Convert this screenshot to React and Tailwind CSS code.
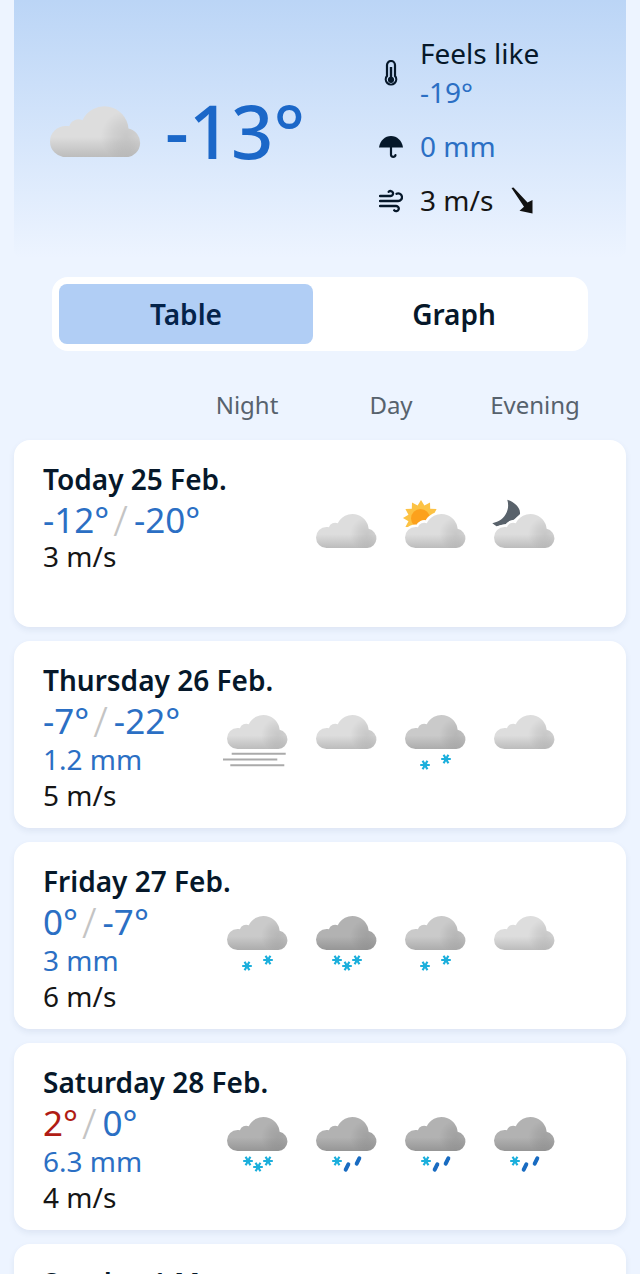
import { useId, useState } from "react";

const FONT = "font-['Noto_Sans','Open_Sans',sans-serif]";

const CLOUD_PATH =
  "M24.5 57a10.5 10.5 0 0 1 0-21c.9 0 1.7.1 2.4.2A6.6 6.6 0 0 1 35.8 32.2A16.2 16.2 0 0 1 66.6 37.8A9.7 9.7 0 0 1 65.3 57Z";

const TONES = {
  light: { top: "#dddddd", bottom: "#bcbcbc" },
  medium: { top: "#cacaca", bottom: "#acacac" },
  dark: { top: "#b2b2b2", bottom: "#969696" },
};

const days = [
  {
    title: "Today 25 Feb.",
    high: "-12°",
    low: "-20°",
    wind: "3 m/s",
    icons: [null, "cloudy", "partlyDay", "partlyNight"],
  },
  {
    title: "Thursday 26 Feb.",
    high: "-7°",
    low: "-22°",
    rain: "1.2 mm",
    wind: "5 m/s",
    icons: ["fog", "cloudy", "lightSnow", "cloudy"],
  },
  {
    title: "Friday 27 Feb.",
    high: "0°",
    low: "-7°",
    rain: "3 mm",
    wind: "6 m/s",
    icons: ["lightSnow", "snow", "lightSnow", "cloudy"],
  },
  {
    title: "Saturday 28 Feb.",
    high: "2°",
    warm: true,
    low: "0°",
    rain: "6.3 mm",
    wind: "4 m/s",
    icons: ["snow", "sleet", "sleet", "sleet"],
  },
  { title: "Sunday 1 Mar.", icons: [] },
];

const ICONS = {
  cloudy: { tone: "light", label: "Cloudy" },
  partlyDay: { tone: "light", label: "Partly cloudy", sun: true },
  partlyNight: { tone: "light", label: "Partly cloudy night", moon: true },
  fog: { tone: "light", label: "Fog", fog: true },
  lightSnow: { tone: "medium", label: "Light snow", flakes: [[34, 73], [55, 67]] },
  snow: { tone: "dark", label: "Snow", flakes: [[35, 67], [45, 73], [55, 67]] },
  sleet: { tone: "dark", label: "Sleet", flakes: [[35, 67]], drops: [[45, 73], [56, 67]] },
};

function Cloud({ tone }) {
  const id = useId();
  const { top, bottom } = TONES[tone];

  return (
    <>
      <defs>
        <linearGradient id={`${id}base`} x1="0" y1="0" x2="0" y2="1">
          <stop offset="0.6" stopColor={top} />
          <stop offset="1" stopColor={bottom} />
        </linearGradient>
        <radialGradient id={`${id}shade`} gradientUnits="userSpaceOnUse" cx="65" cy="43" r="17">
          <stop offset="0" stopColor="#000" stopOpacity="0.1" />
          <stop offset="0.5" stopColor="#000" stopOpacity="0.06" />
          <stop offset="1" stopColor="#000" stopOpacity="0" />
        </radialGradient>
      </defs>
      <path d={CLOUD_PATH} fill={`url(#${id}base)`} />
      <path d={CLOUD_PATH} fill={`url(#${id}shade)`} />
    </>
  );
}

function Sun() {
  // 12 rays, alternating between the outer tips and the valleys
  const points = Array.from({ length: 24 }, (_, i) => {
    const r = i % 2 === 0 ? 18 : 13;
    const a = (i * Math.PI) / 12 - Math.PI / 2;
    return `${30 + r * Math.cos(a)},${27 + r * Math.sin(a)}`;
  }).join(" ");

  return (
    <>
      <polygon points={points} fill="#fcc244" />
      <circle cx="29.5" cy="27.5" r="9.5" fill="#fca11c" />
    </>
  );
}

function Flake({ x, y }) {
  return (
    <g transform={`translate(${x} ${y})`} stroke="#1cafdc" strokeWidth="2.2">
      <path d="M-4.8 0H4.8M-2.4-4.2L2.4 4.2M2.4-4.2L-2.4 4.2" />
      <circle r="2.3" fill="#1cafdc" stroke="none" />
    </g>
  );
}

function WeatherIcon({ name }) {
  const icon = ICONS[name];

  return (
    <svg viewBox="0 6 89 76" className="w-full h-auto" role="img" aria-label={icon.label}>
      {icon.sun && <Sun />}
      {icon.moon && (
        <path
          d="M27.3 8.7C35 11.3 40.6 16.5 40 23C37 27 31 31 26 33L16.5 35.3L12.3 32.2C19 31 24.3 27 26.7 21.3C28.6 16.8 28.4 12.8 27.3 8.7Z"
          fill="#59626b"
        />
      )}
      {(icon.sun || icon.moon) && (
        <path d={CLOUD_PATH} fill="#fff" stroke="#fff" strokeWidth="5" />
      )}
      <Cloud tone={icon.tone} />
      {icon.fog && (
        <path d="M18.7 61.8H72.7M10 67.6H64.3M17.3 73.3H71.3" stroke="#aaa" strokeWidth="2" />
      )}
      {icon.flakes?.map(([x, y]) => (
        <Flake key={`${x}-${y}`} x={x} y={y} />
      ))}
      {icon.drops?.map(([x, y]) => (
        <path
          key={`${x}-${y}`}
          d={`M${x + 1.3} ${y - 2.6}L${x - 1.3} ${y + 2.6}`}
          stroke="#186bc1"
          strokeWidth="4"
          strokeLinecap="round"
        />
      ))}
    </svg>
  );
}

function ThermometerIcon() {
  return (
    <svg viewBox="0 0 24 26" className="w-6 h-[26px]" fill="none" stroke="#06182a" aria-hidden="true">
      <path d="M8 5a4 4 0 0 1 8 0v11a5.2 5.2 0 1 1-8 0Z" strokeWidth="2.2" />
      <path d="M12 7v12" strokeWidth="2.4" />
      <circle cx="12" cy="19.8" r="3.1" fill="#06182a" stroke="none" />
    </svg>
  );
}

function UmbrellaIcon() {
  return (
    <svg viewBox="0 0 24 24" className="size-6" aria-hidden="true">
      <path d="M0 12.5C1 5.5 6 1 12 1s11 4.5 12 11.5Z" fill="#06182a" />
      <path
        d="M12 12v8a2.3 2.3 0 0 0 4.5 0"
        fill="none"
        stroke="#06182a"
        strokeWidth="2.2"
        strokeLinecap="round"
      />
    </svg>
  );
}

function WindIcon() {
  return (
    <svg
      viewBox="0 0 24 24"
      className="size-6"
      fill="none"
      stroke="#06182a"
      strokeWidth="2.3"
      strokeLinecap="round"
      aria-hidden="true"
    >
      <path d="M1 7H11.5a2.5 2.5 0 1 0-1.8-4.2" />
      <path d="M1 12H19.2a3.8 3.8 0 1 0-1.7-7.2" />
      <path d="M1 17H17a2.6 2.6 0 1 1-1.8 4.3" />
    </svg>
  );
}

function WindArrow() {
  return (
    <svg viewBox="0 0 24 27" className="w-6 h-[27px]" role="img" aria-label="Wind from north west">
      <path d="M1.5 1L3.5 .5L17.5 15.5L22.5 13V26.5L9.5 23.8L14 19.8Z" fill="#111" />
    </svg>
  );
}

function CurrentWeather() {
  return (
    <section className="flex mx-[14px] pt-[34px] pb-[38px] rounded-b-lg bg-linear-to-b from-[#bbd5f6] to-[#edf4ff]">
      <div className="flex items-center w-[365px] pl-9 pt-2">
        <svg viewBox="14 22 61 35" className="w-[91px] h-auto shrink-0" role="img" aria-label="Cloudy">
          <Cloud tone="light" />
        </svg>
        <p className="ml-6 text-[74px] leading-[80px] font-medium text-[#1b67c8]">-13°</p>
      </div>
      <ul className="flex flex-col gap-[15px] text-[28px] leading-[39px] whitespace-nowrap">
        <li className="flex items-center gap-[17px]">
          <ThermometerIcon />
          <div className="text-[#06182a]">
            Feels like
            <p className="text-[#2b6fc4]">-19°</p>
          </div>
        </li>
        <li className="flex items-center gap-[17px] text-[#2b6fc4]">
          <UmbrellaIcon />
          0 mm
        </li>
        <li className="flex items-center gap-[17px] text-[#151515]">
          <WindIcon />
          3 m/s
          <WindArrow />
        </li>
      </ul>
    </section>
  );
}

function ViewToggle() {
  const [view, setView] = useState("Table");

  return (
    <div className="flex gap-[14px] mx-[52px] mt-[19px] p-[7px] bg-white rounded-2xl">
      {["Table", "Graph"].map((name) => (
        <button
          key={name}
          type="button"
          aria-pressed={view === name}
          onClick={() => setView(name)}
          className={`flex-1 h-[60px] rounded-lg text-[28px] font-semibold cursor-pointer ${
            view === name ? "bg-[#b1cef5] text-[#04234a]" : "text-[#06182a]"
          }`}
        >
          {name}
        </button>
      ))}
    </div>
  );
}

function DayCard({ day }) {
  return (
    <li className="min-h-[187px] pt-[21px] pl-[29px] pr-[57px] bg-white rounded-2xl shadow-[0_3px_6px_rgba(40,70,110,0.08)]">
      <h2 className="text-[28px] leading-9 font-semibold text-[#06182a]">{day.title}</h2>
      <div className="flex items-start">
        <div className="flex-1 text-[28px] whitespace-nowrap">
          {day.high && (
            <p className="flex items-center h-[42px] pt-1 text-[35px] leading-9 text-[#2b6fc4]">
              <span className={day.warm ? "text-[#b01c14]" : ""}>{day.high}</span>
              <span className="ml-1 mr-[6px] text-[42px] font-light text-[#c4c4c4]">/</span>
              <span>{day.low}</span>
            </p>
          )}
          {day.rain && <p className="leading-[38px] text-[#2b6fc4]">{day.rain}</p>}
          {day.wind && <p className="leading-[34px] text-[#151515]">{day.wind}</p>}
        </div>
        <div className="flex">
          {day.icons.map((name, i) => (
            <div key={i} className="w-[89px]">
              {name && <WeatherIcon name={name} />}
            </div>
          ))}
        </div>
      </div>
    </li>
  );
}

export default function App() {
  return (
    <main className={`h-screen overflow-hidden bg-[#edf4ff] ${FONT}`}>
      <CurrentWeather />
      <ViewToggle />

      {/* Column headings */}
      <div className="flex justify-end mt-9 mb-[17px] pr-[33px]">
        <div className="grid grid-cols-3 w-[432px] text-center text-[24px] leading-9 text-[#57626d]">
          <span>Night</span>
          <span>Day</span>
          <span>Evening</span>
        </div>
      </div>

      <ul className="flex flex-col gap-[14px] mx-[14px]">
        {days.map((day) => (
          <DayCard key={day.title} day={day} />
        ))}
      </ul>
    </main>
  );
}
